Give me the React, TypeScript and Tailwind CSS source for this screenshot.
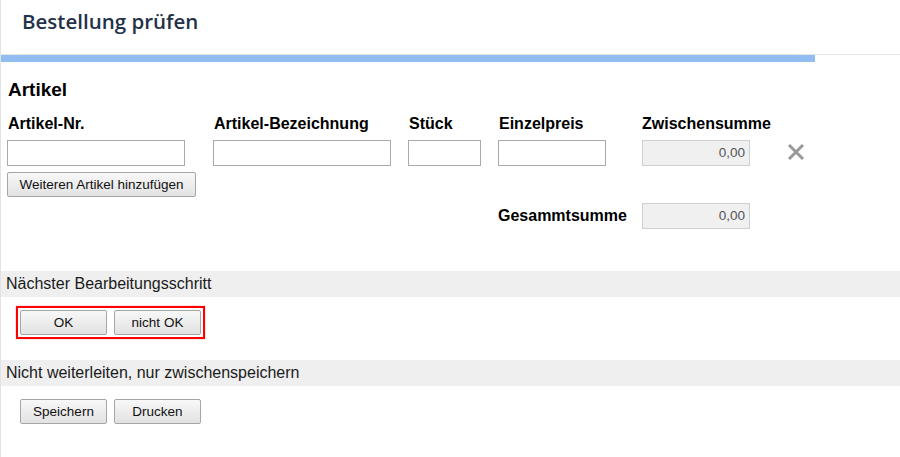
import React from "react";

const arial = { fontFamily: '"Liberation Sans", Arial, sans-serif' };

function Btn({ label, w }: { label: string; w: string }) {
  return (
    <button
      type="button"
      className={`${w} h-[25px] rounded-[2px] border border-[#a6a6a6] bg-gradient-to-b from-[#f8f8f8] to-[#e2e2e2] text-[13.5px] leading-none text-[#111]`}
    >
      {label}
    </button>
  );
}

function Field({ label, w, ml }: { label: string; w: string; ml: string }) {
  return (
    <div className={`${ml} flex flex-col`}>
      <label className="h-[25px] pl-px text-[16px] font-bold leading-[18px] text-black whitespace-nowrap">{label}</label>
      <input className={`${w} h-[26px] border border-[#a9a9a9] bg-white`} />
    </div>
  );
}

function SumBox() {
  return (
    <div className="flex h-[26px] w-[108px] items-center justify-end border border-[#cfcfcf] bg-[#f0f0f0] pr-[4px] text-[13.5px] text-[#555]">
      0,00
    </div>
  );
}

function SectionBar({ title }: { title: string }) {
  return (
    <div className="flex h-[26px] items-center bg-[#efefef] pl-[5px] text-[16px] text-[#1a1a1a]">{title}</div>
  );
}

export default function App() {
  return (
    <div className="h-[457px] w-[900px] overflow-hidden border-l border-[#e2e2e2] bg-white" style={arial}>
      <header className="flex h-[55px] items-start border-b border-[#e6e6e6] pl-[21px] pt-[6px]">
        <h1
          className="text-[20.5px] font-semibold text-[#1f3247]"
          style={{ fontFamily: '"Open Sans", "Noto Sans", sans-serif' }}
        >
          Bestellung prüfen
        </h1>
      </header>
      <div className="h-[7px] w-[814px] bg-[#93bdf0]" />

      <section className="pl-[6px] pt-[17px]">
        <h2 className="pl-px text-[19px] font-bold leading-[22px] text-black">Artikel</h2>
        <div className="mt-[14px] flex items-start">
          <Field label="Artikel-Nr." w="w-[178px]" ml="ml-0" />
          <Field label="Artikel-Bezeichnung" w="w-[178px]" ml="ml-[28px]" />
          <Field label="Stück" w="w-[73px]" ml="ml-[17px]" />
          <Field label="Einzelpreis" w="w-[108px]" ml="ml-[17px]" />
          <div className="ml-[36px] flex w-[108px] flex-col">
            <span className="h-[25px] whitespace-nowrap text-[16px] font-bold leading-[18px] text-black">Zwischensumme</span>
            <SumBox />
          </div>
          <svg className="ml-[37px] mt-[29px]" width="18" height="16" viewBox="0 0 18 16">
            <path d="M2 1 L16 15 M16 1 L2 15" stroke="#9a9a9a" strokeWidth="3" />
          </svg>
        </div>
        <div className="mt-[6px] flex">
          <Btn label="Weiteren Artikel hinzufügen" w="w-[189px]" />
        </div>
        <div className="mt-[6px] flex items-center pl-[491px]">
          <span className="w-[144px] text-[16px] font-bold text-black">Gesammtsumme</span>
          <SumBox />
        </div>
      </section>

      <div className="mt-[42px]">
        <SectionBar title="Nächster Bearbeitungsschritt" />
        <div className="ml-[15px] mt-[9px] flex w-fit gap-[7px] border-2 border-[#ff0000] p-[2px] shadow-[0_0_1px_#f66]">
          <Btn label="OK" w="w-[87px]" />
          <Btn label="nicht OK" w="w-[87px]" />
        </div>
      </div>

      <div className="mt-[21px]">
        <SectionBar title="Nicht weiterleiten, nur zwischenspeichern" />
        <div className="ml-[19px] mt-[13px] flex gap-[7px]">
          <Btn label="Speichern" w="w-[87px]" />
          <Btn label="Drucken" w="w-[87px]" />
        </div>
      </div>
    </div>
  );
}
